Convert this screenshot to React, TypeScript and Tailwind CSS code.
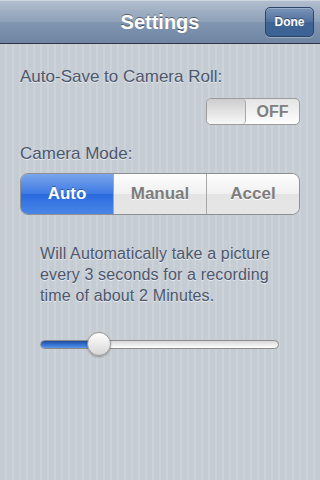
import { useState } from "react";

const MODES = ["Auto", "Manual", "Accel"];

export default function App() {
  const [mode, setMode] = useState("Auto");
  const [autoSave, setAutoSave] = useState(false);
  const [value] = useState(0.245);

  return (
    <div className="w-[320px] h-[480px] overflow-hidden flex flex-col font-['Liberation_Sans',Helvetica,Arial,sans-serif] bg-[repeating-linear-gradient(90deg,#c5ccd4_0px,#c5ccd4_5px,#cbd2d8_5px,#cbd2d8_7px)]">
      {/* Nav bar */}
      <div className="relative h-[44px] shrink-0 flex items-center justify-center bg-[linear-gradient(#b2bfcf,#8fa1b8_50%,#8196b1_51%,#6e85a3)] border-b border-[#2d3642] shadow-[inset_0_1px_0_#cdd5df]">
        <h1 className="text-[20px] font-bold text-white [text-shadow:0_-1px_0_rgba(0,0,0,0.45)]">
          Settings
        </h1>
        <button className="absolute right-[6px] top-[7px] w-[49px] h-[30px] rounded-[5px] border border-[#2c4466] bg-[linear-gradient(#7b94b8,#50719e_50%,#3f6495_51%,#3c6194)] shadow-[0_1px_0_rgba(255,255,255,0.3),inset_0_1px_0_rgba(255,255,255,0.25)] text-[12px] font-bold text-white [text-shadow:0_-1px_0_rgba(0,0,0,0.4)]">
          Done
        </button>
      </div>

      <div className="px-[20px] flex flex-col">
        <p className="mt-[23px] text-[17px] leading-[20px] text-[#4c566c] [text-shadow:0_1px_0_rgba(255,255,255,0.6)]">
          Auto-Save to Camera Roll:
        </p>

        <div className="mt-[11px] flex justify-end">
          <button
            onClick={() => setAutoSave(!autoSave)}
            className="w-[94px] h-[27px] rounded-[5px] border border-[#9c9c9c] bg-[linear-gradient(#e4e4e4,#fefefe)] flex overflow-hidden"
          >
            <div className="w-[39px] h-full rounded-[4px] border-r border-[#a8a8a8] bg-[linear-gradient(#cdcdcd,#f7f7f7)]" />
            <div className="flex-1 flex items-center justify-center text-[16px] font-bold text-[#808080]">
              {autoSave ? "ON" : "OFF"}
            </div>
          </button>
        </div>

        <p className="mt-[19px] text-[17px] leading-[20px] text-[#4c566c] [text-shadow:0_1px_0_rgba(255,255,255,0.6)]">
          Camera Mode:
        </p>

        <div className="mt-[9px] h-[42px] flex rounded-[8px] border border-[#8f8f8f] overflow-hidden">
          {MODES.map((m, i) => (
            <button
              key={m}
              onClick={() => setMode(m)}
              className={`flex-1 flex items-center justify-center text-[17px] font-bold ${
                i > 0 ? "border-l border-[#a6a6a6]" : ""
              } ${
                mode === m
                  ? "text-white bg-[linear-gradient(#7aa5ea,#3d7ae5_50%,#2a6ade_51%,#4a86e8)] [text-shadow:0_-1px_0_rgba(0,0,0,0.35)]"
                  : "text-[#7d7d7d] bg-[linear-gradient(#fdfdfd,#f0f0f0_50%,#e4e4e4_51%,#e6e6e6)] [text-shadow:0_1px_0_#fff]"
              }`}
            >
              {m}
            </button>
          ))}
        </div>
      </div>

      <p className="mt-[28px] px-[40px] text-[16px] leading-[21px] tracking-[0.15px] text-[#4c566c] [text-shadow:0_1px_0_rgba(255,255,255,0.6)]">
        Will Automatically take a picture every 3 seconds for a recording
        time of about 2 Minutes.
      </p>

      {/* Slider */}
      <div className="mt-[26px] ml-[40px] w-[239px] h-[24px] relative flex items-center">
        <div className="w-full h-[9px] rounded-full border border-[#8c8c8c] bg-[linear-gradient(#d8d8d8,#ffffff)] overflow-hidden">
          <div
            className="h-full bg-[linear-gradient(#1f4e9c,#3a78d8_60%,#5b95e6)]"
            style={{ width: `${value * 100}%` }}
          />
        </div>
        <div
          className="absolute top-0 w-[24px] h-[24px] -ml-[12px] rounded-full border border-[#9a9a9a] bg-[linear-gradient(#ffffff,#d6d6d6)] shadow-[0_1px_2px_rgba(0,0,0,0.3)]"
          style={{ left: `${value * 100}%` }}
        />
      </div>
    </div>
  );
}
